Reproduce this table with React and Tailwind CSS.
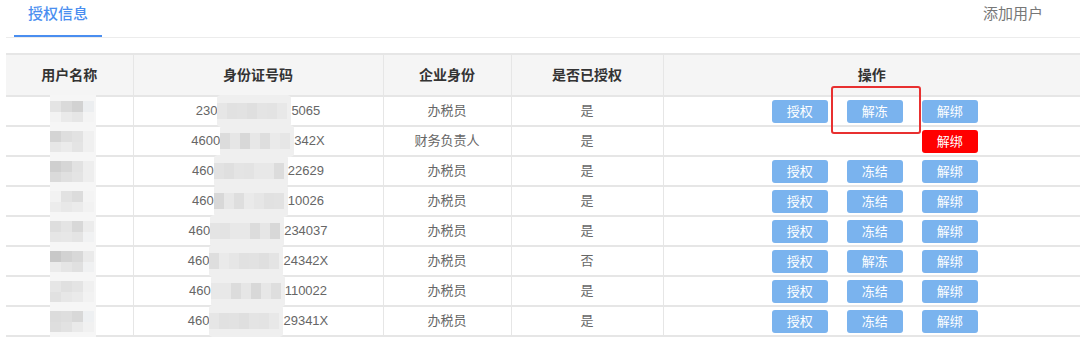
import React from 'react'

const rows = [
  { pre: '230', post: '5065', role: '办税员', auth: '是', ops: ['授权', '解冻', '解绑'] },
  { pre: '4600', post: '342X', role: '财务负责人', auth: '是', ops: null },
  { pre: '460', post: '22629', role: '办税员', auth: '是', ops: ['授权', '冻结', '解绑'] },
  { pre: '460', post: '10026', role: '办税员', auth: '是', ops: ['授权', '冻结', '解绑'] },
  { pre: '460', post: '234037', role: '办税员', auth: '是', ops: ['授权', '冻结', '解绑'] },
  { pre: '460', post: '24342X', role: '办税员', auth: '否', ops: ['授权', '解冻', '解绑'] },
  { pre: '460', post: '110022', role: '办税员', auth: '是', ops: ['授权', '冻结', '解绑'] },
  { pre: '460', post: '29341X', role: '办税员', auth: '是', ops: ['授权', '冻结', '解绑'] },
]

const nameShades = [
  ['bg-[#e4e4e4]', 'bg-[#dadada]', 'bg-[#d2d2d2]', 'bg-[#eceef0]'],
  ['bg-[#d4d4d4]', 'bg-[#dedede]', 'bg-[#e2e2e2]', 'bg-[#f0f0f0]'],
  ['bg-[#cfcfcf]', 'bg-[#d6d6d6]', 'bg-[#e2e2e2]', 'bg-[#eeeeee]'],
  ['bg-[#f2f2f2]', 'bg-[#e2e2e2]', 'bg-[#dcdcdc]', 'bg-[#f4f4f4]'],
  ['bg-[#dedede]', 'bg-[#e4e4e4]', 'bg-[#d8d8d8]', 'bg-[#ececec]'],
  ['bg-[#c8c8c8]', 'bg-[#d2d2d2]', 'bg-[#d8d8d8]', 'bg-[#eaeaea]'],
  ['bg-[#e6e6e6]', 'bg-[#e0e0e0]', 'bg-[#e4e4e4]', 'bg-[#f0f0f0]'],
  ['bg-[#dcdcdc]', 'bg-[#dedede]', 'bg-[#d8d8d8]', 'bg-[#eef0f2]'],
]

const idShades = [
  'bg-[#e6e6e6]', 'bg-[#dcdcdc]', 'bg-[#e2e2e2]', 'bg-[#d8d8d8]', 'bg-[#e4e4e4]', 'bg-[#dedede]', 'bg-[#e8e8e8]',
]

function NameMosaic({ i }) {
  return (
    <div className="absolute left-[44px] top-[-2px] w-[46px] h-[32px] bg-[#f6f6f6] flex flex-col justify-center gap-0">
      <div className="flex">
        {nameShades[i].map((c, k) => (
          <div key={k} className={`${c} w-[11px] h-[11px]`} />
        ))}
      </div>
      <div className="flex">
        {nameShades[(i + 3) % 8].map((c, k) => (
          <div key={k} className={`${c} opacity-60 w-[11px] h-[10px]`} />
        ))}
      </div>
    </div>
  )
}

function IdMosaic({ i }) {
  return (
    <span className="inline-flex items-center self-stretch w-[74px] h-[32px] -my-[2px] bg-[#efefef] rounded-[4px]">
      {idShades.map((c, k) => (
        <span key={k} className={`${idShades[(k + i) % 7]} w-[10px] h-[16px] ${k % 2 ? 'opacity-70' : ''}`} />
      ))}
    </span>
  )
}

function Btn({ label, red, hidden }) {
  return (
    <button
      className={`w-[56px] h-[23px] rounded-[3px] text-[13px] text-white leading-[23px] ${
        red ? 'bg-[#ff0000]' : 'bg-[#7ab3ee]'
      } ${hidden ? 'invisible' : ''}`}
    >
      {label}
    </button>
  )
}

export default function App() {
  return (
    <div
      className="w-[1080px] h-[341px] bg-white overflow-hidden"
      style={{ fontFamily: '"Liberation Sans", "Noto Sans CJK SC", sans-serif' }}
    >
      {/* Tabs */}
      <div className="ml-[6px] h-[38px] flex items-start justify-between border-b border-[#ececec]">
        <div className="ml-[8px] w-[88px] h-[37px] border-b-2 border-[#4a8ef0] text-center text-[15px] leading-[28px] text-[#4a8ef0] font-medium">
          授权信息
        </div>
        <div className="mr-[37px] text-[15px] leading-[28px] text-[#777]">添加用户</div>
      </div>

      {/* Table */}
      <div className="relative ml-[6px] mt-[15px]">
        <table className="w-[1074px] border-collapse table-fixed">
          <colgroup>
            <col className="w-[127px]" />
            <col className="w-[250px]" />
            <col className="w-[128px]" />
            <col className="w-[152px]" />
            <col className="w-[417px]" />
          </colgroup>
          <thead>
            <tr className="h-[42px] bg-[#f5f5f5] border-t-2 border-b-2 border-[#e6e6e6] text-[14px] font-bold text-[#333]">
              <th className="border-r border-[#e6e6e6]">用户名称</th>
              <th className="border-r border-[#e6e6e6]">身份证号码</th>
              <th className="border-r border-[#e6e6e6]">企业身份</th>
              <th className="border-r border-[#e6e6e6]">是否已授权</th>
              <th>操作</th>
            </tr>
          </thead>
          <tbody className="text-[13px] text-[#666]">
            {rows.map((r, i) => (
              <tr key={i} className="h-[30px] border-b-2 border-[#e6e6e6]">
                <td className="relative p-0 border-r border-[#e6e6e6]">
                  <NameMosaic i={i} />
                </td>
                <td className="p-0 border-r border-[#e6e6e6]">
                  <div className="flex items-center justify-center h-[28px]">
                    <span>{r.pre}</span>
                    <IdMosaic i={i} />
                    <span>{r.post}</span>
                  </div>
                </td>
                <td className="p-0 text-center border-r border-[#e6e6e6]">{r.role}</td>
                <td className="p-0 text-center border-r border-[#e6e6e6]">{r.auth}</td>
                <td className="p-0">
                  <div className="flex justify-center gap-[19px] pl-[6px]">
                    {r.ops ? (
                      r.ops.map((o, k) => <Btn key={k} label={o} />)
                    ) : (
                      <>
                        <Btn label="授权" hidden />
                        <Btn label="冻结" hidden />
                        <Btn label="解绑" red />
                      </>
                    )}
                  </div>
                </td>
              </tr>
            ))}
          </tbody>
        </table>

        {/* highlight box */}
        <div className="absolute left-[825px] top-[33px] w-[90px] h-[48px] border-2 border-[#e83030] rounded-[3px]" />
      </div>
    </div>
  )
}
